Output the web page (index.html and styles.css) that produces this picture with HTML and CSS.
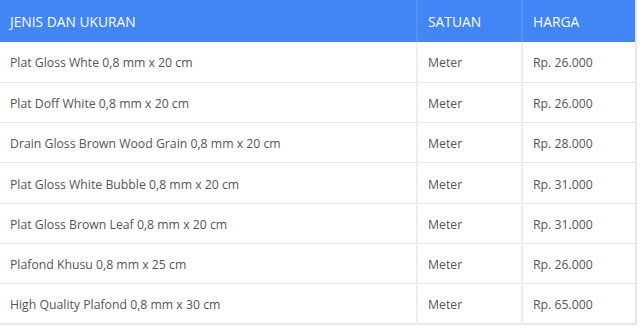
FILE: index.html
```html
<!DOCTYPE html>
<html>
<head>
<meta charset="utf-8">
<link rel="stylesheet" href="styles.css">
</head>
<body>
<table class="price">
  <thead>
    <tr><th class="c1">JENIS DAN UKURAN</th><th class="c2">SATUAN</th><th class="c3">HARGA</th></tr>
  </thead>
  <tbody>
    <tr><td>Plat Gloss Whte 0,8 mm x 20 cm</td><td>Meter</td><td>Rp. 26.000</td></tr>
    <tr><td>Plat Doff White 0,8 mm x 20 cm</td><td>Meter</td><td>Rp. 26.000</td></tr>
    <tr><td>Drain Gloss Brown Wood Grain 0,8 mm x 20 cm</td><td>Meter</td><td>Rp. 28.000</td></tr>
    <tr><td>Plat Gloss White Bubble 0,8 mm x 20 cm</td><td>Meter</td><td>Rp. 31.000</td></tr>
    <tr><td>Plat Gloss Brown Leaf 0,8 mm x 20 cm</td><td>Meter</td><td>Rp. 31.000</td></tr>
    <tr><td>Plafond Khusu 0,8 mm x 25 cm</td><td>Meter</td><td>Rp. 26.000</td></tr>
    <tr><td>High Quality Plafond 0,8 mm x 30 cm</td><td>Meter</td><td>Rp. 65.000</td></tr>
  </tbody>
</table>
</body>
</html>
```
FILE: styles.css
```css
html, body { margin: 0; padding: 0; background: #fff; }
.price {
  border-collapse: collapse;
  width: 637px;
  font-family: "Open Sans", sans-serif;
  table-layout: fixed;
  border-right: 2px solid #e8e8e8;
  border-bottom: 2px solid #e8e8e8;
}
.price th {
  background: #4285f4;
  color: #fff;
  font-weight: normal;
  font-size: 13.8px;
  text-align: left;
  height: 42px;
  padding: 0 10px;
  box-sizing: border-box;
  border-left: 2px solid #5591f5;
}
.price th.c1 { border-left: none; width: 417px; }
.price th.c2 { width: 105px; }
.price td {
  font-size: 12.25px;
  color: #555;
  height: 40.3px;
  padding: 2px 10px 0;
  box-sizing: border-box;
  border-top: 1px solid #e6e6e6;
  border-left: 2px solid #eeeeee;
}
.price td:first-child { border-left: none; }
.price tbody tr:first-child td { border-top: none; }
```
